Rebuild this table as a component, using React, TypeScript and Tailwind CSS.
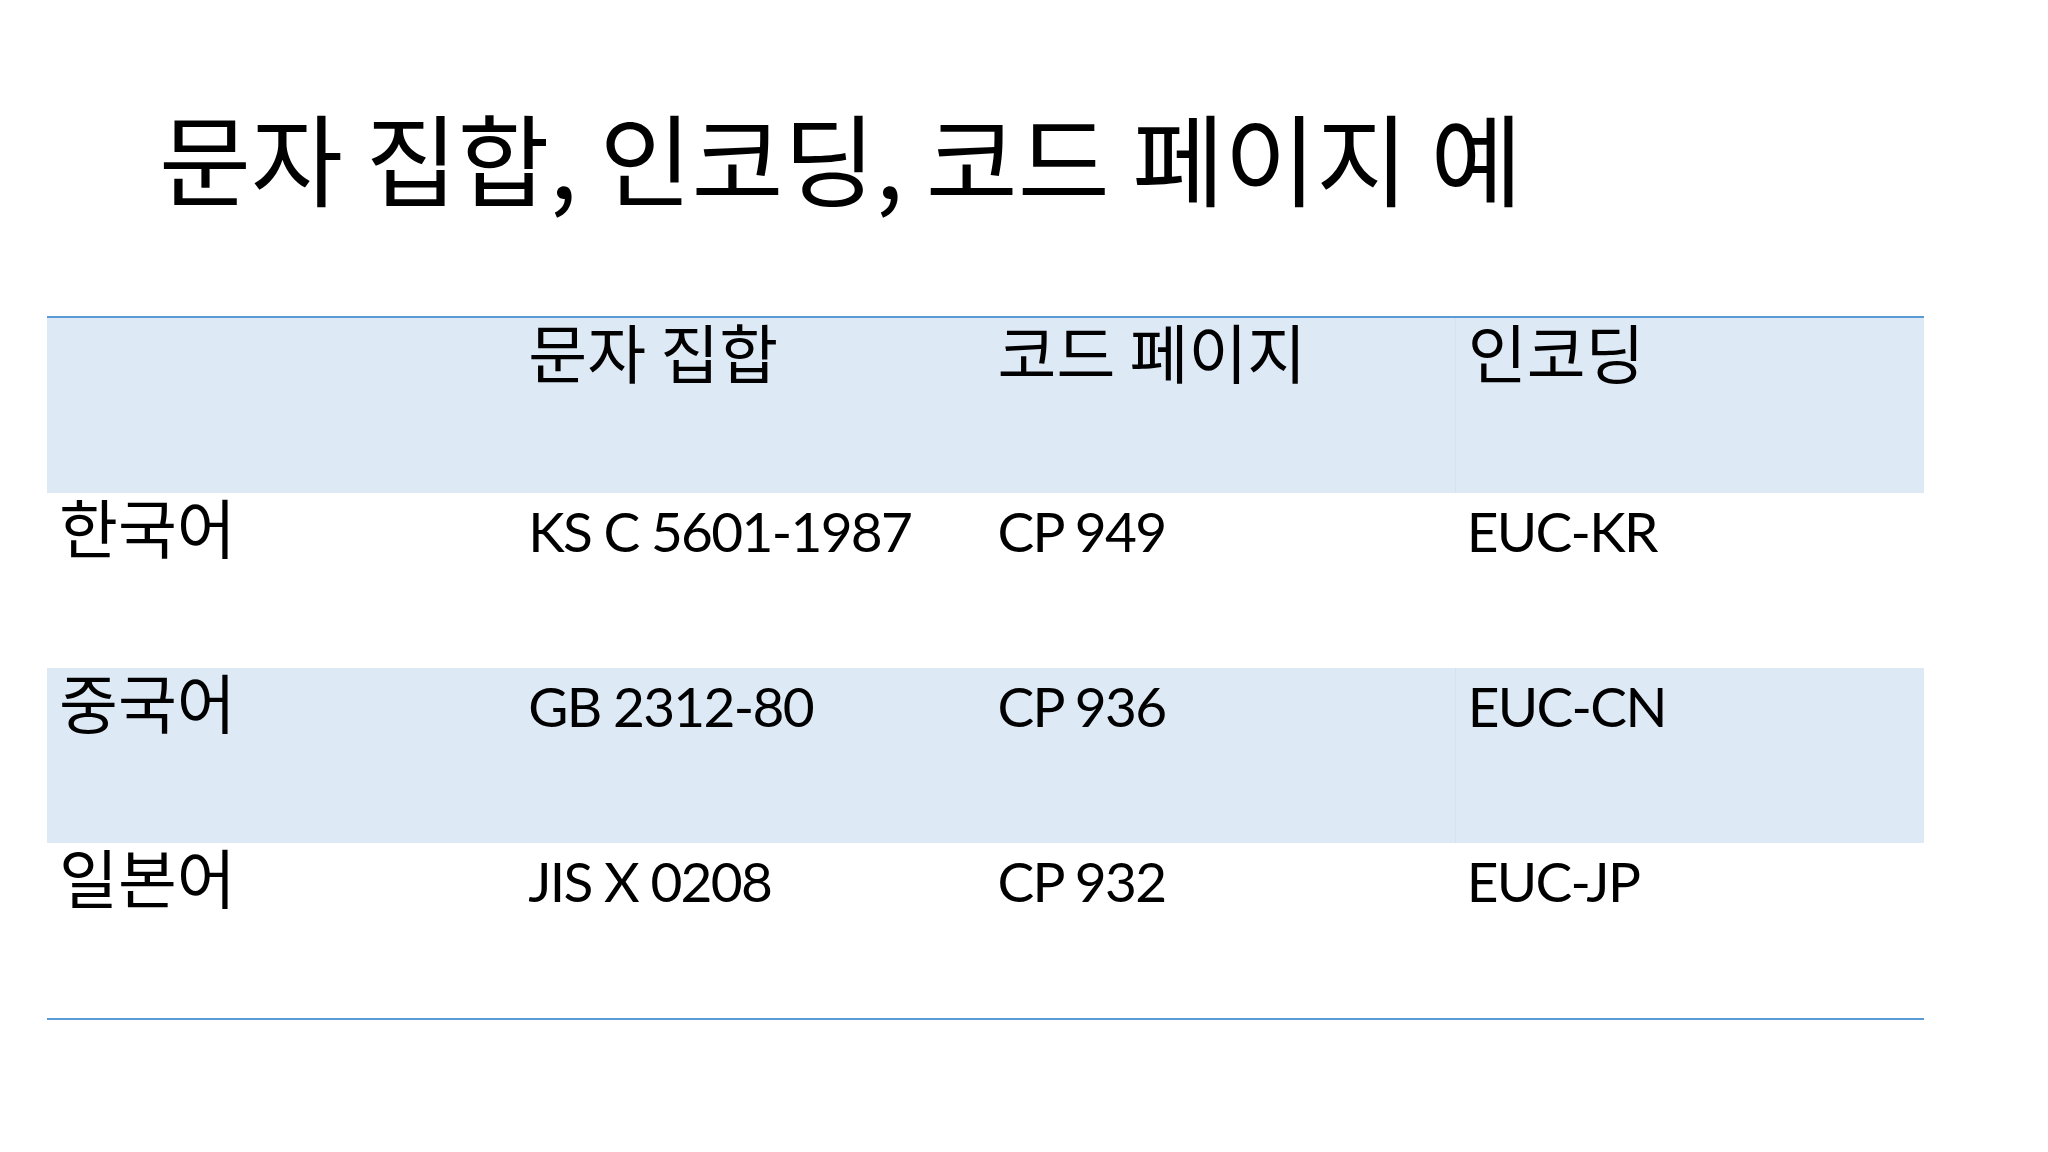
import React from "react";

const rows: { cells: string[]; shaded: boolean }[] = [
  { cells: ["", "문자 집합", "코드 페이지", "인코딩"], shaded: true },
  { cells: ["한국어", "KS C 5601-1987", "CP 949", "EUC-KR"], shaded: false },
  { cells: ["중국어", "GB 2312-80", "CP 936", "EUC-CN"], shaded: true },
  { cells: ["일본어", "JIS X 0208", "CP 932", "EUC-JP"], shaded: false },
];

const isLatin = (s: string) => /^[A-Za-z0-9 \-]+$/.test(s);

export default function App() {
  return (
    <div className="w-[2048px] h-[1152px] bg-white text-black overflow-hidden flex flex-col">
      <div className="pl-[159px] pt-[106px] h-[316px]">
        <h1 className="text-[100px] leading-none font-normal whitespace-nowrap [font-family:'Noto_Sans_CJK_KR','Noto_Sans',sans-serif]">
          문자 집합, 인코딩, 코드 페이지 예
        </h1>
      </div>
      <div className="ml-[47px] w-[1877px] border-t-2 border-b-2 border-[#5b9bd5] flex flex-col">
        {rows.map((r, i) => (
          <div
            key={i}
            className={`grid grid-cols-4 h-[175px] ${r.shaded ? "bg-[#dee9f6]" : "bg-white"}`}
          >
            {r.cells.map((c, j) => (
              <div
                key={j}
                className={`px-[12px] whitespace-nowrap ${j === 3 && r.shaded ? "border-l border-[#d6e2f0]" : ""} ${
                  isLatin(c)
                    ? "pt-[11px] text-[55px] tracking-[-1.7px] leading-none [font-family:'Lato','Noto_Sans',sans-serif]"
                    : "pt-[0px] text-[64px] leading-none [font-family:'Noto_Sans_CJK_KR','Noto_Sans',sans-serif]"
                }`}
              >
                {c}
              </div>
            ))}
          </div>
        ))}
      </div>
    </div>
  );
}
